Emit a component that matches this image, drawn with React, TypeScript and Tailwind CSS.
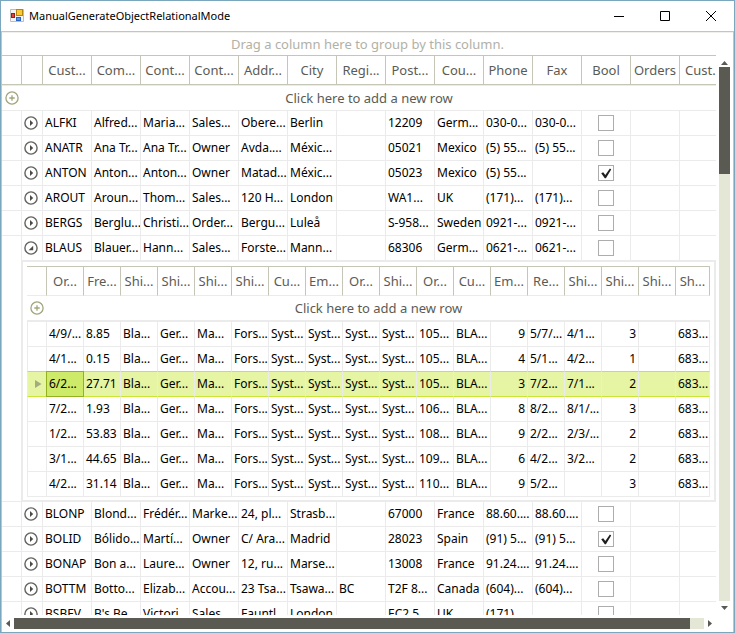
import React from "react";

const columns = ["Cust...", "Com...", "Cont...", "Cont...", "Addr...", "City", "Regi...", "Post...", "Cou...", "Phone", "Fax", "Bool", "Orders", "Cust..."];

type Customer = { cells: string[]; checked: boolean };

const before: Customer[] = [
  { cells: ["ALFKI", "Alfred...", "Maria...", "Sales...", "Obere...", "Berlin", "", "12209", "Germ...", "030-0...", "030-0..."], checked: false },
  { cells: ["ANATR", "Ana Tr...", "Ana Tr...", "Owner", "Avda....", "Méxic...", "", "05021", "Mexico", "(5) 55...", "(5) 55..."], checked: false },
  { cells: ["ANTON", "Anton...", "Anton...", "Owner", "Matad...", "Méxic...", "", "05023", "Mexico", "(5) 55...", ""], checked: true },
  { cells: ["AROUT", "Aroun...", "Thom...", "Sales...", "120 H...", "London", "", "WA1...", "UK", "(171)...", "(171)..."], checked: false },
  { cells: ["BERGS", "Berglu...", "Christi...", "Order...", "Bergu...", "Luleå", "", "S-958...", "Sweden", "0921-...", "0921-..."], checked: false },
];

const expanded: Customer = {
  cells: ["BLAUS", "Blauer...", "Hann...", "Sales...", "Forste...", "Mann...", "", "68306", "Germ...", "0621-...", "0621-..."],
  checked: false,
};

const after: Customer[] = [
  { cells: ["BLONP", "Blond...", "Frédér...", "Marke...", "24, pl...", "Strasb...", "", "67000", "France", "88.60....", "88.60...."], checked: false },
  { cells: ["BOLID", "Bólido...", "Martí...", "Owner", "C/ Ara...", "Madrid", "", "28023", "Spain", "(91) 5...", "(91) 5..."], checked: true },
  { cells: ["BONAP", "Bon a...", "Laure...", "Owner", "12, ru...", "Marse...", "", "13008", "France", "91.24....", "91.24...."], checked: false },
  { cells: ["BOTTM", "Botto...", "Elizab...", "Accou...", "23 Tsa...", "Tsawa...", "BC", "T2F 8...", "Canada", "(604)...", "(604)..."], checked: false },
  { cells: ["BSBEV", "B's Be...", "Victori...", "Sales...", "Fauntl...", "London", "", "EC2 5...", "UK", "(171)...", ""], checked: false },
];

const orderColumns = ["Or...", "Fre...", "Shi...", "Shi...", "Shi...", "Shi...", "Cu...", "Em...", "Or...", "Shi...", "Or...", "Cu...", "Em...", "Re...", "Shi...", "Shi...", "Shi...", "Sh..."];

const orders = [
  ["4/9/...", "8.85", "105...", "9", "5/7/...", "4/1...", "3"],
  ["4/1...", "0.15", "105...", "4", "5/1...", "4/2...", "1"],
  ["6/2...", "27.71", "105...", "3", "7/2...", "7/1...", "2"],
  ["7/2...", "1.93", "106...", "8", "8/2...", "8/1/...", "3"],
  ["1/2...", "53.83", "108...", "9", "2/2...", "2/3/...", "2"],
  ["3/1...", "44.65", "109...", "6", "4/2...", "3/2...", "2"],
  ["4/2...", "31.14", "110...", "9", "5/2...", "", "3"],
].map(([date, freight, id, employee, required, shipped, via]) => [
  date, freight, "Bla...", "Ger...", "Ma...", "Fors...", "Syst...", "Syst...", "Syst...", "Syst...", id, "BLA...", employee, required, shipped, via, "", "683...",
]);

const SELECTED = 2;

function AddIcon() {
  return (
    <button aria-label="Add row" className="mx-auto block">
      <svg width="14" height="14" viewBox="0 0 14 14" fill="none" stroke="#a0a67c" strokeWidth="1.3">
        <circle cx="7" cy="7" r="6.100" />
        <path d="M7 4.3v5.4M4.300 7h5.400" />
      </svg>
    </button>
  );
}

function Expander({ open }: { open: boolean }) {
  return (
    <button aria-label={open ? "Collapse row" : "Expand row"} aria-expanded={open} className="block">
      <svg width="14" height="14" viewBox="0 0 14 14" fill="none">
        <circle cx="7" cy="7" r="6.100" stroke="#63635f" strokeWidth="1.4" />
        <path d={open ? "M9.200 4.800v4.400H4.600z" : "M6 4v6l3.200-3z"} fill="#4a4a46" />
      </svg>
    </button>
  );
}

function CustomerRow({ row, open = false }: { row: Customer; open?: boolean }) {
  const line = "h-[25px] overflow-hidden border-r border-b border-[#ebebeb] px-0.5";
  return (
    <tr>
      <td rowSpan={open ? 2 : 1} className={line} />
      <td className={line}>
        <Expander open={open} />
      </td>
      {row.cells.map((text, i) => (
        <td key={i} className={line}>{text}</td>
      ))}
      <td className={line}>
        <span className="relative mx-auto block size-4">
          <input type="checkbox" aria-label={`Bool ${row.cells[0]}`} defaultChecked={row.checked} className="peer block size-4 appearance-none border border-[#adadad] bg-white" />
          <svg className="pointer-events-none absolute inset-0 hidden peer-checked:block" width="16" height="16" viewBox="0 0 16 16" fill="#1e1e1e">
            <path d="M3.2 8.2l2-1 2.1 2.9 4.6-6.6 1.3.9-5.3 8.8H6.8z" />
          </svg>
        </span>
      </td>
      <td className={line} />
      <td className="border-b border-[#ebebeb]" />
    </tr>
  );
}

function OrdersTable() {
  return (
    <table className="w-full table-fixed border-separate border-spacing-0">
      <colgroup>
        <col className="w-5" />
        {orderColumns.map((_, i) => (
          <col key={i} className={i < orderColumns.length - 1 ? "w-[37px]" : ""} />
        ))}
      </colgroup>
      <thead>
        <tr className="text-[13px] text-[#5b5b56]">
          <th aria-label="Row state" className="h-[30px] border-t border-r border-b border-[#c6c6b7] border-b-[#ebebeb]" />
          {orderColumns.map((title, i) => (
            <th key={i} className="overflow-hidden border-t border-r border-b border-[#c6c6b7] border-b-[#ebebeb] font-normal">{title}</th>
          ))}
        </tr>
      </thead>
      <tbody>
        <tr>
          <td className="h-[26px] border-b-2 border-[#ebebeb]">
            <AddIcon />
          </td>
          <td colSpan={18} className="border-b-2 border-[#ebebeb] text-center text-[13px] text-[#5b5b56]">Click here to add a new row</td>
        </tr>
        {orders.map((cells, r) => {
          const selected = r === SELECTED;
          const bottom = selected || r === SELECTED - 1 ? "border-b-[#c9e637]" : "border-b-[#ebebeb]";
          return (
            <tr key={r} className={selected ? "bg-[#e5f5a4]" : ""}>
              <td className={`h-[25px] border-x border-b border-[#ebebeb] ${bottom}`}>
                {selected && (
                  <svg className="ml-[7px] block" width="7" height="8" viewBox="0 0 7 8" fill="#a3ab80">
                    <path d="M0 0l6.5 4L0 8z" />
                  </svg>
                )}
              </td>
              {cells.map((text, c) => (
                <td
                  key={c}
                  className={`relative border-r border-b border-[#ebebeb] px-0.5 ${bottom} ${c === 12 || c === 15 ? "text-right" : ""} ${selected && c === 0 ? "bg-[#cdea69]" : ""}`}
                >
                  {text}
                  {selected && c === 0 && <span className="absolute -inset-px border border-[#93b11f]" />}
                </td>
              ))}
            </tr>
          );
        })}
      </tbody>
    </table>
  );
}

function CustomerTable() {
  return (
    <table className="w-full table-fixed border-separate border-spacing-0">
      <colgroup>
        <col className="w-5" />
        <col className="w-[21px]" />
        {columns.map((_, i) => (
          <col key={i} className={i < columns.length - 1 ? "w-[49px]" : ""} />
        ))}
      </colgroup>
      <thead>
        <tr className="text-[13px] text-[#5b5b56]">
          <th aria-label="Row state" className="h-[29px] border-r border-b border-[#c6c6b7]" />
          <th aria-label="Details" className="border-r border-b border-[#c6c6b7]" />
          {columns.map((title, i) => (
            <th
              key={i}
              className={`overflow-hidden border-b border-[#c6c6b7] font-normal ${i < columns.length - 1 ? "border-r" : "pl-[5px] text-left"}`}
            >
              {title}
            </th>
          ))}
        </tr>
      </thead>
      <tbody>
        <tr>
          <td className="h-[26px] border-y border-[#ebebeb]">
            <AddIcon />
          </td>
          <td colSpan={15} className="border-y border-[#ebebeb] text-center text-[13px] text-[#5b5b56]">Click here to add a new row</td>
        </tr>
        {before.map((row) => (
          <CustomerRow key={row.cells[0]} row={row} />
        ))}
        <CustomerRow row={expanded} open />
        <tr>
          <td colSpan={15} className="border-t border-r-2 border-b-2 border-l border-[#ebebeb] p-1 pb-[3px]">
            <OrdersTable />
          </td>
        </tr>
        {after.map((row) => (
          <CustomerRow key={row.cells[0]} row={row} />
        ))}
      </tbody>
    </table>
  );
}

function TitleBar() {
  return (
    <header className="flex h-[30px] shrink-0 items-center bg-white pl-2">
      <svg width="16" height="16" viewBox="0 0 16 16">
        <path d="M1.500 1.500h13v12h-13z" fill="#f4f4f4" stroke="#bdbdbd" />
        <rect x="7.500" y="1.500" width="6" height="6" fill="#fcc935" stroke="#b8860f" />
        <rect x="2.500" y="5.500" width="3" height="4" fill="#d8453c" stroke="#961d18" />
        <rect x="7.500" y="9.500" width="4" height="3" fill="#5b95ec" stroke="#2d62bd" />
      </svg>
      <h1 className="ml-1 flex-1 text-[11px] text-black">ManualGenerateObjectRelationalMode</h1>
      <button aria-label="Minimize" className="flex w-[46px] justify-center">
        <svg width="10" height="10" viewBox="0 0 10 10" stroke="#000"><path d="M0 5.5h10" /></svg>
      </button>
      <button aria-label="Maximize" className="flex w-[46px] justify-center">
        <svg width="10" height="10" viewBox="0 0 10 10" stroke="#000" fill="none"><path d="M.5.5h9v9h-9z" /></svg>
      </button>
      <button aria-label="Close" className="flex w-[46px] justify-center">
        <svg width="10" height="10" viewBox="0 0 10 10" stroke="#000"><path d="M0 0l10 10M10 0L0 10" /></svg>
      </button>
    </header>
  );
}

export default function App() {
  return (
    <div className="flex h-screen flex-col overflow-hidden border border-[#7ba7be] bg-white font-['Noto_Sans','Open_Sans',sans-serif] text-[12px] leading-4 whitespace-nowrap text-black">
      <TitleBar />
      <main className="flex min-h-0 flex-1 flex-col border-x border-t border-[#c6c6b7]">
        <p className="flex h-[23px] shrink-0 items-center justify-center border-t border-[#f0f0ec] text-[13px] text-[#b1b1a6]">
          Drag a column here to group by this column.
        </p>
        <div className="flex min-h-0 flex-1">
          <div className="min-w-0 flex-1 overflow-hidden border-t border-[#c6c6b7]">
            <CustomerTable />
          </div>
          <div className="flex w-[17px] shrink-0 flex-col items-center pt-1">
            <button aria-label="Scroll up" className="flex h-2 items-center">
              <svg width="7" height="4" viewBox="0 0 7 4" fill="#5a5a53"><path d="M3.500 0L7 4H0z" /></svg>
            </button>
            <div className="w-[11px] flex-1 bg-[#e4e7d5]">
              <div className="h-[20%] bg-[#5a5a53]" />
            </div>
            <button aria-label="Scroll down" className="flex h-[14px] items-center">
              <svg width="7" height="4" viewBox="0 0 7 4" fill="#5a5a53"><path d="M0 0h7L3.500 4z" /></svg>
            </button>
          </div>
        </div>
        <div className="flex h-[17px] shrink-0 items-center pr-[17px]">
          <button aria-label="Scroll left" className="flex w-3 justify-center">
            <svg width="4" height="7" viewBox="0 0 4 7" fill="#5a5a53"><path d="M4 0v7L0 3.500z" /></svg>
          </button>
          <div className="h-[11px] flex-1 bg-[#e4e7d5]">
            <div className="h-full w-[98%] bg-[#5a5a53]" />
          </div>
          <button aria-label="Scroll right" className="flex w-3 justify-center">
            <svg width="4" height="7" viewBox="0 0 4 7" fill="#5a5a53"><path d="M0 0v7l4-3.500z" /></svg>
          </button>
        </div>
      </main>
    </div>
  );
}
